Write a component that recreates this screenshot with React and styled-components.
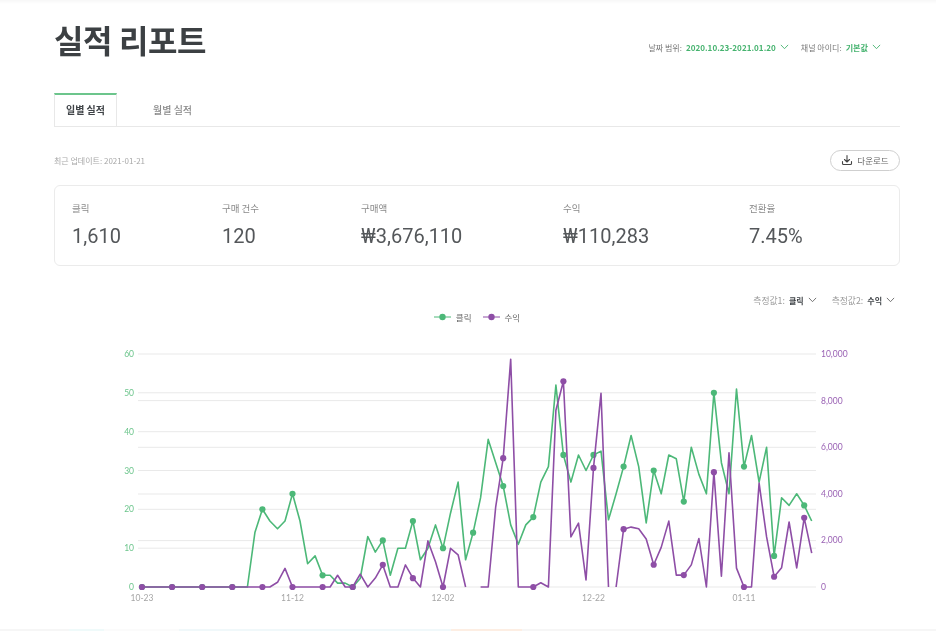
import React from "react";
import styled, { createGlobalStyle } from "styled-components";

const FONT = `"Noto Sans CJK KR", "Noto Sans", sans-serif`;
const NUM = `Roboto, "Noto Sans CJK KR", sans-serif`;

const Global = createGlobalStyle`
  html, body { margin: 0; padding: 0; background: #fff; }
  body { font-family: ${FONT}; color: #3f4347; overflow: hidden; }
`;

const Page = styled.div`
  width: 936px;
  height: 631px;
  box-sizing: border-box;
  padding: 0 36px 0 54px;
  overflow: hidden;
  background: linear-gradient(#f7f7f7, #fff 4px);
  filter: blur(0.35px);
`;
const Header = styled.header`
  height: 93px;
  display: flex;
  justify-content: space-between;
  padding-right: 19px;
`;
const Title = styled.h1`
  margin: 14px 0 0;
  font-size: 32px;
  line-height: 50px;
  font-weight: 700;
  color: #3c4043;
  letter-spacing: -0.4px;
`;
const Filters = styled.div`
  display: flex;
  gap: 12px;
  margin-top: 40px;
  height: 14px;
  align-items: center;
  font-size: 8px;
`;
const Filter = styled.div`
  display: flex;
  align-items: center;
  gap: 4px;
  color: #777;
`;
const FilterValue = styled.span`
  color: #46b36f;
  font-weight: 700;
  font-size: 8.1px;
`;
const Tabs = styled.nav`
  display: flex;
  height: 34px;
  box-sizing: border-box;
  border-bottom: 1px solid #e8e8e8;
`;
const Tab = styled.div`
  width: ${(p) => (p.$active ? "63px" : "auto")};
  height: 31px;
  box-sizing: border-box;
  display: flex;
  align-items: center;
  justify-content: center;
  font-size: 10px;
  font-weight: ${(p) => (p.$active ? 700 : 500)};
  color: ${(p) => (p.$active ? "#3f4347" : "#8a8a8a")};
  margin-left: ${(p) => (p.$active ? 0 : "35px")};
  border-top: 2px solid ${(p) => (p.$active ? "#6cc58c" : "transparent")};
  border-left: 1px solid ${(p) => (p.$active ? "#e8e8e8" : "transparent")};
  border-right: 1px solid ${(p) => (p.$active ? "#e8e8e8" : "transparent")};
  ${(p) => p.$active && "height: 34px; padding-bottom: 3px;"}
`;
const UpdateRow = styled.div`
  height: 58px;
  display: flex;
  align-items: center;
  justify-content: space-between;
  padding-top: 8px;
  box-sizing: border-box;
`;
const Updated = styled.span`
  font-size: 8px;
  color: #a8a8a8;
`;
const Download = styled.button`
  width: 70px;
  height: 21px;
  box-sizing: border-box;
  border: 1px solid #cfcfcf;
  border-radius: 11px;
  background: #fff;
  display: flex;
  align-items: center;
  justify-content: center;
  gap: 4px;
  padding: 0;
  font-family: ${FONT};
  font-size: 8.5px;
  color: #666;
`;
const Card = styled.section`
  height: 81px;
  box-sizing: border-box;
  border: 1px solid #ebebeb;
  border-radius: 6px;
  display: grid;
  grid-template-columns: 150px 139px 202px 186px 1fr;
  padding: 15px 0 0 17px;
`;
const Stat = styled.div`
  display: flex;
  flex-direction: column;
`;
const StatLabel = styled.span`
  font-size: 9.5px;
  line-height: 14px;
  color: #8a8a8a;
`;
const StatValue = styled.span`
  margin-top: 8px;
  font-family: ${NUM};
  font-size: 20px;
  line-height: 26px;
  color: #54575a;
`;
const Measures = styled.div`
  margin-top: 27px;
  height: 14px;
  display: flex;
  justify-content: flex-end;
  align-items: center;
  gap: 15px;
  font-size: 8.8px;
  padding-right: 5px;
`;
const Measure = styled.div`
  display: flex;
  align-items: center;
  gap: 4px;
  color: #9a9a9a;
`;
const MeasureValue = styled.b`
  color: #3f4347;
  font-weight: 700;
  font-size: 8px;
`;
const Legend = styled.div`
  height: 19px;
  display: flex;
  justify-content: center;
  align-items: center;
  gap: 11px;
  font-size: 8.5px;
  color: #666;
`;
const LegendItem = styled.div`
  display: flex;
  align-items: center;
  gap: 5px;
`;
const Chart = styled.svg`
  display: block;
  margin-left: -54px;
  width: 936px;
  height: 303px;
  flex: none;
`;
const FooterStrip = styled.div`
  margin: 0 -36px 0 -54px;
  height: 2px;
  background: linear-gradient(
    90deg,
    #f6f6f6 0 69px,
    #effafa 69px 104px,
    #fbfbfb 104px 179px,
    #f0f8fa 179px 451px,
    #fdeee3 451px 522px,
    #f6f6f6 522px
  );
`;

const Chevron = ({ color = "#46b36f", size = 9 }) => (
  <svg width={size} height={size * 0.65} viewBox="0 0 10 6.5" fill="none" stroke={color} strokeWidth="1">
    <path d="M1 1l4 4.2L9 1" />
  </svg>
);

const Mark = ({ color }) => (
  <svg width="17" height="8" viewBox="0 0 17 8">
    <line x1="0" y1="4" x2="17" y2="4" stroke={color} strokeWidth="1" />
    <circle cx="8.5" cy="4" r="3.2" fill={color} />
  </svg>
);

const GREEN = "#4cb878";
const PURPLE = "#8e4ea6";

const clicks = [0,0,0,0,0,0,0,0,0,0,0,0,0,0,0,14,20,17,15,17,24,17,6,8,3,3,1,1,0,2.2,13,9,12,3,10,10,17,7,10,16,10,19,27,7,14,23,38,32,26,16,11,16,18,27,31,52,34,27,34,30,34,35,17.3,24,31,39,31,16.5,30,24,34,33,22,36,29,24,50,32,24,51,31,39,27,36,8,23,21,24,21,17];
const revenue = [0,0,0,0,0,0,0,0,0,0,0,0,0,0,0,0,0,0,200,800,0,0,0,0,0,0,500,0,0,550,0,380,950,0,0,950,380,0,1980,1080,0,1660,1380,0,null,0,0,3440,5530,9770,0,0,0,180,0,7590,8830,2150,2740,300,5110,8310,0,"gap",2480,2570,2500,2060,955,1700,2830,510,510,950,2080,0,4930,460,5760,810,0,0,4460,2150,440,830,2790,820,2970,1450];

const X0 = 142, DX = 7.525, BASE = 261, TOP = 28;
const xAt = (i) => X0 + DX * i;
const yClicks = (v) => BASE - (v / 60) * (BASE - TOP);
const yRev = (v) => BASE - (v / 10000) * (BASE - TOP);
const pts = (arr, fn) => arr.map((v, i) => [xAt(i), fn(v)]);

const clickPath = pts(clicks, yClicks).map((p, i) => `${i ? "L" : "M"}${p[0].toFixed(1)} ${p[1].toFixed(1)}`).join(" ");
const revPath = (() => {
  let d = "", pen = false;
  revenue.forEach((v, i) => {
    if (v === null) { pen = false; return; }
    const val = v === "gap" ? 0 : v;
    d += `${pen && v !== "gap" ? "L" : "M"}${xAt(i).toFixed(1)} ${yRev(val).toFixed(1)} `;
    pen = true;
  });
  return d;
})();

const GRID = [28, 66.8, 74.6, 105.7, 121.3, 144.5, 168, 183.3, 214.6, 222.2, 261];
const leftTicks = [60, 50, 40, 30, 20, 10, 0];
const rightTicks = ["10,000", "8,000", "6,000", "4,000", "2,000", "0"];
const xTicks = [["10-23", 0], ["11-12", 20], ["12-02", 40], ["12-22", 60], ["01-11", 80]];

const TickText = styled.text`
  font-family: "Lato", "Noto Sans", sans-serif;
  font-size: 8.5px;
`;

const stats = [
  ["클릭", "1,610"],
  ["구매 건수", "120"],
  ["구매액", "₩3,676,110"],
  ["수익", "₩110,283"],
  ["전환율", "7.45%"],
];

export default function App() {
  return (
    <Page>
      <Global />
      <Header>
        <Title>실적 리포트</Title>
        <Filters>
          <Filter>
            날짜 범위: <FilterValue>2020.10.23-2021.01.20</FilterValue> <Chevron />
          </Filter>
          <Filter>
            채널 아이디: <FilterValue>기본값</FilterValue> <Chevron />
          </Filter>
        </Filters>
      </Header>
      <Tabs>
        <Tab $active>일별 실적</Tab>
        <Tab>월별 실적</Tab>
      </Tabs>
      <UpdateRow>
        <Updated>최근 업데이트: 2021-01-21</Updated>
        <Download>
          <svg width="12" height="12" viewBox="0 0 24 24" fill="none" stroke="#444" strokeWidth="2.2" strokeLinecap="round" strokeLinejoin="round">
            <path d="M12 3v13M7 11l5 5 5-5M3 15v4a2 2 0 0 0 2 2h14a2 2 0 0 0 2-2v-4" />
          </svg>
          다운로드
        </Download>
      </UpdateRow>
      <Card>
        {stats.map(([label, value]) => (
          <Stat key={label}>
            <StatLabel>{label}</StatLabel>
            <StatValue>{value}</StatValue>
          </Stat>
        ))}
      </Card>
      <Measures>
        <Measure>
          측정값1: <MeasureValue>클릭</MeasureValue> <Chevron color="#666" />
        </Measure>
        <Measure>
          측정값2: <MeasureValue>수익</MeasureValue> <Chevron color="#666" />
        </Measure>
      </Measures>
      <Legend>
        <LegendItem><Mark color={GREEN} />클릭</LegendItem>
        <LegendItem><Mark color={PURPLE} />수익</LegendItem>
      </Legend>
      <Chart viewBox="0 0 936 303">
        {GRID.map((y) => (
          <line key={y} x1="138" x2="816" y1={y} y2={y} stroke="#e9e9e9" strokeWidth="1" />
        ))}
        {leftTicks.map((t) => (
          <TickText key={t} x="134" y={yClicks(t) + 3} textAnchor="end" fill="#6cc58c">{t}</TickText>
        ))}
        {rightTicks.map((t, i) => (
          <TickText key={t} x="821" y={TOP + i * ((BASE - TOP) / 5) + 3} fill="#9a62b4">{t}</TickText>
        ))}
        {xTicks.map(([t, i]) => (
          <TickText key={t} x={xAt(i)} y={BASE + 14} textAnchor="middle" fill="#a5a5a5">{t}</TickText>
        ))}
        <path d={clickPath} fill="none" stroke={GREEN} strokeWidth="1.6" strokeLinejoin="round" />
        {clicks.map((v, i) => i % 4 === 0 && <circle key={i} cx={xAt(i)} cy={yClicks(v)} r="3.1" fill={GREEN} />)}
        <path d={revPath} fill="none" stroke={PURPLE} strokeWidth="1.6" strokeLinejoin="round" />
        {revenue.map((v, i) => i % 4 === 0 && v !== null && <circle key={i} cx={xAt(i)} cy={yRev(v)} r="3.1" fill={PURPLE} />)}
      </Chart>
      <FooterStrip />
    </Page>
  );
}
